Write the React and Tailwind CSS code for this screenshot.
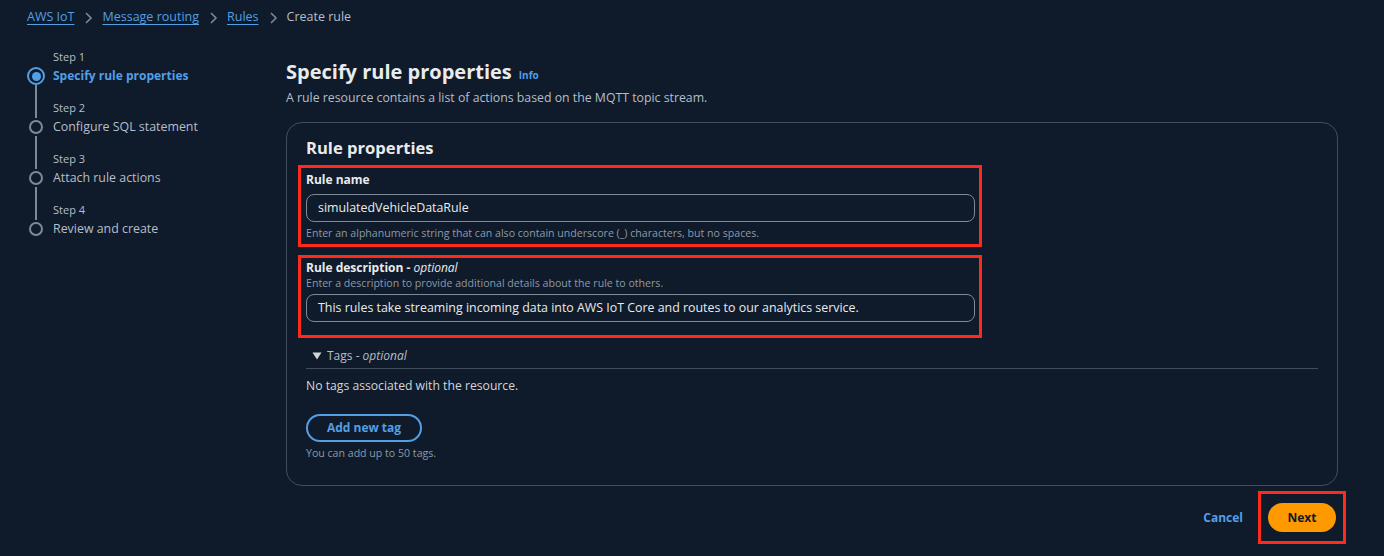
import React from "react";

const font = { fontFamily: '"Open Sans", "Noto Sans", Arial, sans-serif' };

function Chevron() {
  return (
    <svg width="16" height="16" viewBox="0 0 16 16" className="mx-[6px] text-[#7d8998]">
      <path d="M6 3l5 5-5 5" fill="none" stroke="currentColor" strokeWidth="1.6" />
    </svg>
  );
}

function Step({ n, label, active, first, last }) {
  return (
    <div className="flex h-[51px]">
      <div className="w-[18px] mr-[8px] flex flex-col items-center">
        <div className={first ? "w-[2px] h-[19px]" : "w-[2px] h-[19px] bg-[#7d8998]"} />
        {active ? (
          <div className="w-[18px] h-[18px] rounded-full border-2 border-[#539fe5] flex items-center justify-center shrink-0">
            <div className="w-[9px] h-[9px] rounded-full bg-[#539fe5]" />
          </div>
        ) : (
          <div className="w-[18px] h-[18px] flex items-center justify-center shrink-0">
            <div className="w-[14px] h-[14px] rounded-full border-2 border-[#7d8998]" />
          </div>
        )}
        {!last && <div className="w-[2px] flex-1 bg-[#7d8998]" />}
      </div>
      <div>
        <div className="text-[11px] text-[#b6bec9] leading-[16px] mt-[1px]">Step {n}</div>
        <div className={active ? "mt-[2px] text-[12px] font-bold text-[#539fe5] leading-[18px]" : "mt-[2px] text-[12.4px] text-[#b6bec9] leading-[18px]"}>{label}</div>
      </div>
    </div>
  );
}

export default function App() {
  return (
    <div style={font} className="w-[1384px] h-[556px] bg-[#0f1b2a] text-[#d1d5db] overflow-hidden">
      <div className="flex items-center pl-[27px] pt-[8px] h-[19px] box-content text-[12.5px]">
        <span className="text-[#539fe5] underline underline-offset-[3px]">AWS IoT</span>
        <Chevron />
        <span className="text-[#539fe5] underline underline-offset-[3px]">Message routing</span>
        <Chevron />
        <span className="text-[#539fe5] underline underline-offset-[3px]">Rules</span>
        <Chevron />
        <span className="text-[#b6bec9]">Create rule</span>
      </div>
      <div className="flex pt-[21px]">
        <div className="w-[286px] pl-[27px] shrink-0">
          <Step n={1} label="Specify rule properties" active first />
          <Step n={2} label="Configure SQL statement" />
          <Step n={3} label="Attach rule actions" />
          <Step n={4} label="Review and create" last />
        </div>
        <div className="w-[1052px] mt-[10px]">
          <div className="flex items-baseline">
            <h1 className="text-[20px] font-bold text-[#e9ebed] leading-[28px]">Specify rule properties</h1>
            <span className="ml-[7px] text-[10px] font-bold text-[#539fe5]">Info</span>
          </div>
          <p className="text-[12.3px] text-[#b6bec9] leading-[18px] mt-[3px]">A rule resource contains a list of actions based on the MQTT topic stream.</p>
          <div className="mt-[15px] border border-[#414d5c] rounded-[16px] h-[364px] pt-[13px] pl-[11px] pr-[19px]">
            <h2 className="pl-[8px] text-[16.6px] font-bold text-[#e9ebed] leading-[24px]">Rule properties</h2>
            <div className="mt-[5px] w-[684px] h-[82px] border-[3px] border-[#ff2a1a] pl-[5px] pr-[4px] pt-[4px]">
              <div className="text-[12px] font-bold text-[#e9ebed] leading-[16px]">Rule name</div>
              <div className="mt-[6px] h-[28px] border-[1.5px] border-[#7d8998] rounded-[8px] flex items-center pl-[11px] text-[12.4px] text-[#e9ebed]">simulatedVehicleDataRule</div>
              <div className="mt-[4px] text-[10.6px] text-[#8d99a8] leading-[14px]">Enter an alphanumeric string that can also contain underscore (_) characters, but no spaces.</div>
            </div>
            <div className="mt-[8px] w-[684px] h-[83px] border-[3px] border-[#ff2a1a] pl-[5px] pr-[4px] pt-[2px]">
              <div className="text-[12px] font-bold text-[#e9ebed] leading-[16px]">Rule description - <span className="italic font-normal">optional</span></div>
              <div className="text-[10.6px] text-[#8d99a8] leading-[14px]">Enter a description to provide additional details about the rule to others.</div>
              <div className="mt-[4px] h-[28px] border-[1.5px] border-[#7d8998] rounded-[8px] flex items-center pl-[11px] text-[12.4px] text-[#e9ebed]">This rules take streaming incoming data into AWS IoT Core and routes to our analytics service.</div>
            </div>
            <div className="ml-[8px] mt-[9px] pb-[3px] border-b border-[#414d5c] flex items-center pl-[6px] text-[12px] text-[#b6bec9] leading-[18px]">
              <svg width="10" height="10" viewBox="0 0 10 10" className="mr-[5px]"><path d="M0.5 1.5h9L5 8.5z" fill="#d1d5db" /></svg>
              <span>Tags - <span className="italic">optional</span></span>
            </div>
            <div className="ml-[8px] mt-[8px] text-[12.2px] text-[#d1d5db] leading-[18px]">No tags associated with the resource.</div>
            <div className="ml-[8px] mt-[19px] w-[116px] h-[28px] rounded-full border-2 border-[#539fe5] flex items-center justify-center text-[12px] font-bold text-[#539fe5]">Add new tag</div>
            <div className="ml-[8px] mt-[4px] text-[10.6px] text-[#8d99a8] leading-[14px]">You can add up to 50 tags.</div>
          </div>
          <div className="flex justify-end items-center mt-[5px] mr-[-8px]">
            <span className="text-[12px] font-bold text-[#539fe5] mr-[15px]">Cancel</span>
            <div className="w-[88px] h-[53px] border-[3px] border-[#ff2a1a] flex items-center justify-center">
              <div className="w-[68px] h-[29px] rounded-full bg-[#ff9900] flex items-center justify-center text-[12px] font-bold text-[#0f1b2a]">Next</div>
            </div>
          </div>
        </div>
      </div>
    </div>
  );
}
